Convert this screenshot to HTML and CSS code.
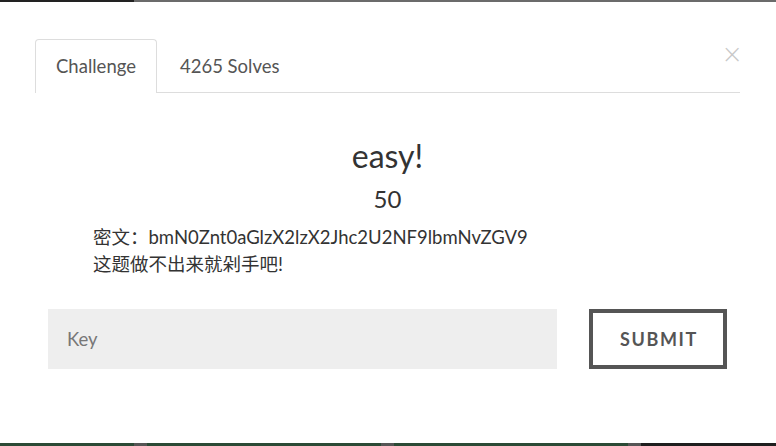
FILE: index.html
```html
<!DOCTYPE html>
<html lang="zh">
<head>
<meta charset="utf-8">
<link rel="stylesheet" href="styles.css">
</head>
<body>
<div class="topbar"><div class="topbar-dark"></div><div class="topbar-gray"></div></div>
<div class="modal">
  <div class="nav-row">
    <ul class="tabs">
      <li class="tab active">Challenge</li>
      <li class="tab">4265 Solves</li>
    </ul>
    <span class="close">&times;</span>
  </div>
  <div class="body">
    <h2 class="title">easy!</h2>
    <div class="value">50</div>
    <div class="desc">
      <p>密文：bmN0Znt0aGlzX2lzX2Jhc2U2NF9lbmNvZGV9</p>
      <p>这题做不出来就剁手吧!</p>
    </div>
    <form class="submit-row">
      <input class="key" type="text" placeholder="Key">
      <button class="btn" type="button">SUBMIT</button>
    </form>
  </div>
</div>
<div class="bottombar">
  <div class="seg green w134"></div><div class="seg gray w13"></div>
  <div class="seg green w234"></div><div class="seg gray w13"></div>
  <div class="seg green w234"></div><div class="seg gray w13"></div>
  <div class="seg dark fill"></div>
</div>
</body>
</html>
```
FILE: styles.css
```css
html, body {
  margin: 0;
  padding: 0;
  background: #fff;
  height: 446px;
  overflow: hidden;
}
body {
  font-family: Lato, "Noto Sans CJK SC", sans-serif;
  color: #333;
  display: flex;
  flex-direction: column;
}
.topbar {
  display: flex;
  height: 2px;
}
.topbar-dark { width: 134px; background: #222; }
.topbar-gray { flex: 1; background: #6b6b6b; }

.modal {
  flex: 1;
  padding: 37px 36px 0 35px;
}
.nav-row {
  position: relative;
}
.tabs {
  list-style: none;
  margin: 0;
  padding: 0;
  display: flex;
  border-bottom: 1px solid #ddd;
}
.tab {
  height: 52px;
  line-height: 52px;
  padding: 0 20px 0 22px;
  font-size: 18.5px;
  color: #555;
  border: 1px solid transparent;
  border-bottom: none;
  border-radius: 4px 4px 0 0;
  margin-bottom: -1px;
}
.tab.active {
  border-color: #ddd;
  background: #fff;
  height: 53px;
  padding: 0 20px;
}
.close {
  position: absolute;
  right: -3px;
  top: 0;
  font-size: 26px;
  line-height: 30px;
  color: #c8c8c8;
  font-family: "DejaVu Sans", sans-serif;
  font-weight: 300;
}
.body {
  text-align: center;
  padding-top: 46px;
}
.title {
  margin: 0;
  font-size: 32px;
  font-weight: 400;
  line-height: 34px;
}
.value {
  font-size: 24px;
  line-height: 30px;
  margin-top: 11px;
}
.desc {
  text-align: left;
  margin: 10px 0 0 58px;
  font-size: 18.5px;
  line-height: 27px;
}
.desc p { margin: 0; }
.submit-row {
  display: flex;
  margin: 31px 0 0 13px;
  gap: 32px;
}
.key {
  width: 509px;
  height: 60px;
  box-sizing: border-box;
  border: none;
  background: #eee;
  padding: 0 19px;
  font-family: Lato, sans-serif;
  font-size: 18.5px;
  color: #555;
  outline: none;
}
.key::placeholder { color: #777; }
.btn {
  width: 138px;
  height: 60px;
  box-sizing: border-box;
  border: 4px solid #555;
  background: #fff;
  font-family: Lato, sans-serif;
  font-weight: 700;
  font-size: 18px;
  letter-spacing: 1.6px;
  color: #555;
  padding: 0 0 0 2px;
}
.bottombar {
  display: flex;
  height: 3px;
}
.seg.green { background: #2b4a35; }
.seg.gray { background: #555; }
.seg.dark { background: #1e1e1e; }
.w134 { width: 134px; }
.w13 { width: 13px; }
.w234 { width: 234px; }
.fill { flex: 1; }
```
